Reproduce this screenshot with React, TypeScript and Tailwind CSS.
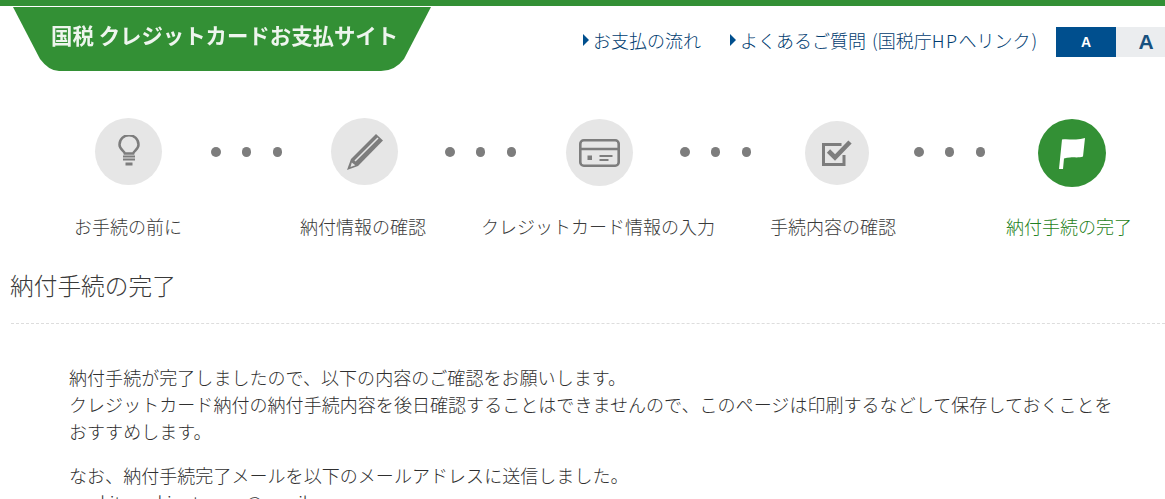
const FONT = "font-['Noto_Sans_CJK_JP','Roboto',sans-serif]";

function Dots({ className }: { className: string }) {
  return (
    <div className={`flex w-[71px] shrink-0 justify-between ${className}`}>
      <span className="size-[9.5px] rounded-full bg-[#7d7d7d]" />
      <span className="size-[9.5px] rounded-full bg-[#7d7d7d]" />
      <span className="size-[9.5px] rounded-full bg-[#7d7d7d]" />
    </div>
  );
}

function Circle({ children, className }: { children: React.ReactNode; className: string }) {
  return (
    <div className={`flex shrink-0 items-center justify-center rounded-full ${className}`}>
      {children}
    </div>
  );
}

function Bulb() {
  return (
    <svg className="blur-[0.3px]" width="24" height="33" viewBox="0 0 24 33" fill="none" stroke="#7d7d7d">
      <path d="M7.800 18.500c-.4-2.500-5.300-4.200-5.300-8.800a9.500 9.500 0 0 1 19 0c0 4.600-4.900 6.300-5.300 8.800z" strokeWidth="2.500" />
      <path d="M6 21.500h12M6 24.500h12" strokeWidth="1.800" />
      <path d="M8.500 29h7" strokeWidth="3" />
    </svg>
  );
}

function Pencil() {
  return (
    <svg className="blur-[0.3px]" width="36" height="36" viewBox="0 0 36 36" fill="none">
      <path d="M29 0l7 6.500L11 32 0 36l4-11z" fill="#7d7d7d" />
      <path d="M4.800 28.500 3.500 33l4.800-1.700z" fill="#e6e6e6" />
      <path d="M8 27 31 4" stroke="#e6e6e6" strokeWidth="1.600" />
    </svg>
  );
}

function Card() {
  return (
    <svg className="blur-[0.3px]" width="41" height="28" viewBox="0 0 41 28" fill="none" stroke="#7d7d7d">
      <rect x="1.300" y="1.300" width="38.400" height="25.400" rx="3.500" strokeWidth="2.600" />
      <path d="M1 10h39" strokeWidth="2.400" />
      <rect x="8.500" y="16.500" width="4.500" height="4.500" fill="#7d7d7d" stroke="none" />
      <path d="M20.500 17h13M20.500 21h9" strokeWidth="1.800" />
    </svg>
  );
}

function Check() {
  return (
    <svg className="blur-[0.3px]" width="30" height="26" viewBox="0 0 30 26" fill="none" stroke="#7d7d7d">
      <path d="M19.500 4.500H1.500v20H22V15" strokeWidth="3" />
      <path d="M6.500 11l6.500 6.500L28 2" strokeWidth="4.600" />
    </svg>
  );
}

function Flag() {
  return (
    <svg className="blur-[0.2px]" width="26" height="31" viewBox="0 0 26 31" fill="#ffffff">
      <path d="M3 1.500C8 .5 12 2 17 1.500c3-.3 6-.7 9-1.500l-2 18.500c-4 1.500-9 .5-13 1-2 0-4 .5-6 1L4 31H0z" />
    </svg>
  );
}

function Arrow() {
  return <span className="mr-[4px] h-0 w-0 border-y-[6px] border-l-[6.500px] border-y-transparent border-l-[#004f8e]" />;
}

function StepLabel({ children, className }: { children: string; className: string }) {
  return <div className={`flex justify-center whitespace-nowrap text-[18px] font-light ${className}`}>{children}</div>;
}

export default function App() {
  return (
    <div className={`h-[499px] w-[1165px] overflow-hidden bg-white ${FONT}`}>
      <div className="h-[6px] bg-[#339035]" />
      <div className="flex h-[65px] items-start border-t border-white">
        <div className="ml-[13px] flex h-[64px] w-[418px] shrink-0 items-start bg-[#339035] pl-[38px] pt-[13px] [clip-path:path('M0_0H418L391_52Q382_64_368_64H46Q36_64_27_52Z')]">
          <span className="text-[21.400px] font-semibold leading-[30px] text-[#eef5ee] blur-[0.3px]">
            国税 クレジットカードお支払サイト
          </span>
        </div>
        <div className="ml-[152px] flex shrink-0 items-center pt-[20px] text-[18px] font-light leading-[26px] text-[#003c70]">
          <a className="flex items-center pb-[4px]"><Arrow />お支払の流れ</a>
          <a className="ml-[29px] flex items-center whitespace-pre pb-[4px]">
            <Arrow />
            よくあるご質問<span className="ml-[2px]"> (国税庁</span><span className="tracking-[1.500px]">HP</span>へリンク<span className="ml-[1px]">)</span>
          </a>
          <div className="ml-[19px] flex h-[30px] font-['Liberation_Sans',sans-serif]">
            <div className="flex w-[60px] items-center justify-center bg-[#004f8e] text-[14px] font-bold text-white">A</div>
            <div className="flex w-[60px] items-center justify-center bg-[#ebedef] text-[21px] font-bold text-[#17517f]">A</div>
          </div>
        </div>
      </div>

      <div className="ml-[95px] mt-[47px] flex h-[69px] items-start">
        <Circle className="size-[67px] bg-[#e6e6e6]"><Bulb /></Circle>
        <Dots className="ml-[49px] mt-[29px]" />
        <Circle className="ml-[49px] size-[67px] bg-[#e6e6e6]"><Pencil /></Circle>
        <Dots className="ml-[47px] mt-[29px]" />
        <Circle className="ml-[50px] mt-px size-[67px] bg-[#e6e6e6]"><Card /></Circle>
        <Dots className="ml-[47px] mt-[29px]" />
        <Circle className="ml-[54px] mt-[3px] size-[64px] bg-[#e6e6e6]"><Check /></Circle>
        <Dots className="ml-[45px] mt-[29px]" />
        <Circle className="ml-[53px] mt-px size-[68px] bg-[#339035]"><Flag /></Circle>
      </div>

      <div className="ml-[74px] mt-[27px] flex h-[24px] items-center leading-[24px]">
        <StepLabel className="w-[108px] text-[#3a3a3a]">お手続の前に</StepLabel>
        <StepLabel className="ml-[118px] w-[126px] text-[#3a3a3a]">納付情報の確認</StepLabel>
        <StepLabel className="ml-[55px] w-[234px] text-[#3a3a3a]">クレジットカード情報の入力</StepLabel>
        <StepLabel className="ml-[55px] w-[126px] text-[#3a3a3a]">手続内容の確認</StepLabel>
        <StepLabel className="ml-[110px] w-[126px] text-[#1f7f22]">納付手続の完了</StepLabel>
      </div>

      <h1 className="ml-[10px] mt-[30px] text-[23.700px] font-light leading-[34px] text-[#3a3a3a]">納付手続の完了</h1>
      <div className="ml-[11px] mt-[21px] border-t border-dashed border-[#dddddd]" />

      <div className="ml-[69px] mt-[40px] text-[18px] font-light leading-[27px] tracking-[0.050px] text-[#2f2f2f]">
        <p className="whitespace-nowrap">
          納付手続が完了しましたので、以下の内容のご確認をお願いします。
          <br />
          クレジットカード納付の納付手続内容を後日確認することはできませんので、このページは印刷するなどして保存しておくことを
          <br />
          おすすめします。
        </p>
        <p className="mt-[17px] whitespace-nowrap">
          なお、納付手続完了メールを以下のメールアドレスに送信しました。
          <br />
          naokitomakinotaoma@gmail.com
        </p>
      </div>
    </div>
  );
}
